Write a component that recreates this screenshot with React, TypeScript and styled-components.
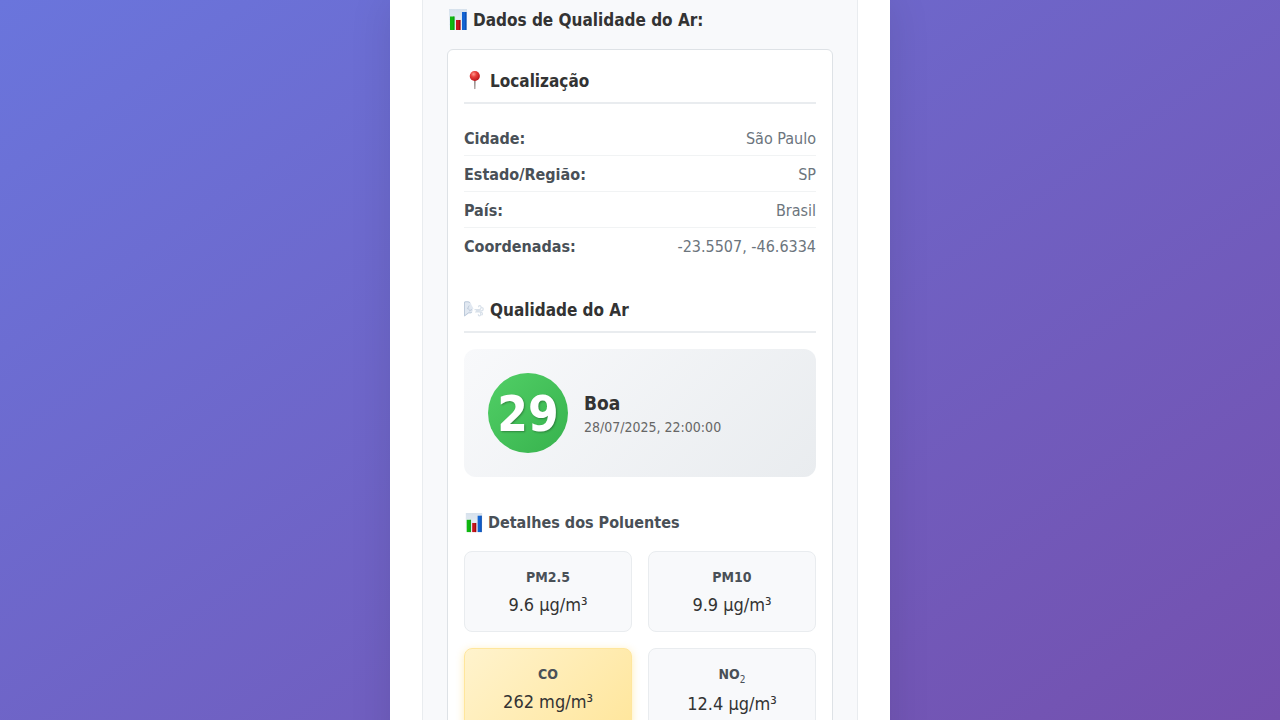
import React from "react";
import styled, { createGlobalStyle, css } from "styled-components";

const GlobalStyle = createGlobalStyle`
  *, *::before, *::after { box-sizing: border-box; }
  body {
    margin: 0;
    font-family: Tahoma, "DejaVu Sans Condensed", "Noto Sans", sans-serif;
    font-size: 16px;
    color: #333;
  }
  h2, h3, h4, p, dl, dt, dd { margin: 0; }
`;

const Page = styled.div`
  height: 100vh;
  overflow: hidden;
  background: linear-gradient(145deg, #6a75dc 0%, #7450ae 100%);
`;

const Container = styled.main`
  max-width: 500px;
  min-height: 100vh;
  margin: 0 auto;
  padding: 0 32px;
  background: #fff;
  box-shadow: 0 0 40px rgba(0, 0, 0, 0.1);
`;

const Panel = styled.section`
  padding: 6px 24px 24px;
  background: #f8f9fb;
  border: solid #e9ecef;
  border-width: 0 1px;
`;

const Title = styled.h2`
  display: flex;
  align-items: center;
  gap: 4px;
  margin-bottom: 15px;
  font-size: 17px;
  line-height: 28px;
`;

const Card = styled.div`
  padding: 16px;
  background: #fff;
  border: 1px solid #dee2e6;
  border-radius: 6px;
`;

const SectionTitle = styled.h3`
  display: flex;
  align-items: center;
  gap: 4px;
  margin-bottom: 16px;
  padding-bottom: 6px;
  border-bottom: 2px solid #e9ecef;
  font-size: 17px;
  line-height: 30px;
`;

const SubTitle = styled.h4`
  display: flex;
  align-items: center;
  gap: 4px;
  margin: 32px 0 14px;
  color: #495057;
  font-size: 16px;
  line-height: 28px;
`;

const DetailList = styled.dl`
  margin-bottom: 32px;
`;

const DetailRow = styled.div`
  display: flex;
  justify-content: space-between;
  padding: 8px 0 6px;
  line-height: 21px;
  border-bottom: 1px solid #f1f3f4;

  &:last-child { border-bottom: 0; }
`;

const DetailLabel = styled.dt`
  color: #495057;
  font-weight: 700;
`;

const DetailValue = styled.dd`
  color: #6c757d;
`;

const Summary = styled.div`
  display: flex;
  align-items: center;
  gap: 16px;
  padding: 24px;
  border-radius: 12px;
  background: linear-gradient(135deg, #f8f9fb 0%, #e9ecef 100%);
`;

const Score = styled.div`
  display: grid;
  place-items: center;
  width: 80px;
  height: 80px;
  padding-top: 4px;
  border-radius: 50%;
  background: linear-gradient(135deg, #51cf66 0%, #37b24d 100%);
  color: #fff;
  font-size: 49px;
  font-weight: 700;
  line-height: 56px;
  text-shadow: 1px 1px 2px rgba(0, 0, 0, 0.3);
`;

const Level = styled.p`
  font-size: 19px;
  font-weight: 700;
  line-height: 24px;
`;

const Stamp = styled.p`
  margin-top: 4px;
  color: #666;
  font-size: 14px;
  line-height: 17px;
`;

const PollutantGrid = styled.div`
  display: grid;
  grid-template-columns: 1fr 1fr;
  gap: 16px;
`;

const Pollutant = styled.div<{ $main?: boolean }>`
  padding: 16px;
  border: 1px solid #e9ecef;
  border-radius: 8px;
  background: #f8f9fb;
  text-align: center;

  ${(p) =>
    p.$main &&
    css`
      border-color: #ffe69c;
      background: linear-gradient(135deg, #fff3cd 0%, #ffe69c 100%);
      box-shadow: 0 2px 8px rgba(255, 193, 7, 0.3);
    `}
`;

const PollutantName = styled.p`
  margin-bottom: 8px;
  color: #495057;
  font-size: 14px;
  font-weight: 700;
  line-height: 18px;

  sub { font-size: 10px; font-weight: 400; line-height: 10px; }
`;

const PollutantValue = styled.p`
  font-size: 18px;
  line-height: 21px;
`;

const ChartIcon = ({ size }: { size: number }) => (
  <svg width={size} height={size} viewBox="0 0 22 22" aria-hidden="true">
    <defs>
      <linearGradient id="paper" x1="0" y1="0" x2="0" y2="1">
        <stop offset="0" stopColor="#d6e1ec" />
        <stop offset="1" stopColor="#f3f7fb" />
      </linearGradient>
    </defs>
    <rect x="2" y="0" width="18" height="21" fill="url(#paper)" />
    <path d="M2 5.5h18M2 10.5h18M2 15.5h18M8.3 0v21M14.3 0v21" stroke="#dbe5ee" strokeWidth="0.5" />
    <rect x="3" y="7.5" width="4.4" height="13.5" fill="#0fb80f" />
    <rect x="6.4" y="7.5" width="1" height="13.5" fill="#079a12" />
    <rect x="9" y="11" width="4.4" height="10" fill="#c4161c" />
    <rect x="12.4" y="11" width="1" height="10" fill="#96060c" />
    <rect x="15" y="3" width="4.4" height="18" fill="#1263d2" />
    <rect x="18.4" y="3" width="1" height="18" fill="#0848a8" />
  </svg>
);

const PinIcon = () => (
  <svg width="22" height="22" viewBox="0 0 22 22" aria-hidden="true">
    <defs>
      <radialGradient id="pinHead" cx="0.38" cy="0.32" r="0.7">
        <stop offset="0" stopColor="#ff9a90" />
        <stop offset="0.4" stopColor="#e8403a" />
        <stop offset="1" stopColor="#b9151b" />
      </radialGradient>
    </defs>
    <path d="M10 9h1.7l-.3 9.2-.55 1-.55-1z" fill="#8e8583" />
    <circle cx="10.8" cy="6" r="5.1" fill="url(#pinHead)" />
  </svg>
);

const WindIcon = () => (
  <svg width="22" height="22" viewBox="0 1 22 22" fill="none" aria-hidden="true">
    <path d="M0 3.5C3 2.6 6.3 3.3 7 5.6c.3 1.7 1.4 3 2.4 4.7.3.7-.9.8-.9 1.2.5.7.3 1.3-.2 1.7.3 2-1.2 2.3-3.3 2.1L0 19z" fill="#e1e8f1" />
    <path d="M.5 4v14M1 4c2-.5 4-.2 5 .8M5.2 7.5l-1.7 3.2 2 .6M1 17.5l3.7-2.8c1.6.3 2.8.1 3-.7M5 13l3-1.5" stroke="#b9c6d7" strokeWidth="0.9" />
    <path d="M10.5 11.6h4.8c2.2 0 2.4-4 .4-4-1 0-1.3.8-.9 1.6M12 12.8h5.4c2.4 0 2.4-3.4.2-3.2M11 14h4.2c2 0 2 3.8.2 3.8-.9 0-1.2-.7-.9-1.5M16.5 14.2c2.4 0 2.6 2.8.8 2.8" stroke="#d9e1ea" strokeWidth="1.2" />
  </svg>
);

const details = [
  ["Cidade:", "São Paulo"],
  ["Estado/Região:", "SP"],
  ["País:", "Brasil"],
  ["Coordenadas:", "-23.5507, -46.6334"],
];

const pollutants = [
  { id: "pm25", name: "PM2.5", value: "9.6 µg/m³" },
  { id: "pm10", name: "PM10", value: "9.9 µg/m³" },
  { id: "co", name: "CO", value: "262 mg/m³", main: true },
  { id: "no2", name: <>NO<sub>2</sub></>, value: "12.4 µg/m³" },
];

export default function App() {
  return (
    <Page>
      <GlobalStyle />
      <Container>
        <Panel>
          <Title><ChartIcon size={22} />Dados de Qualidade do Ar:</Title>
          <Card>
            <SectionTitle><PinIcon />Localização</SectionTitle>
            <DetailList>
              {details.map(([label, value]) => (
                <DetailRow key={label}>
                  <DetailLabel>{label}</DetailLabel>
                  <DetailValue>{value}</DetailValue>
                </DetailRow>
              ))}
            </DetailList>
            <SectionTitle><WindIcon />Qualidade do Ar</SectionTitle>
            <Summary>
              <Score>29</Score>
              <div>
                <Level>Boa</Level>
                <Stamp>28/07/2025, 22:00:00</Stamp>
              </div>
            </Summary>
            <SubTitle><ChartIcon size={20} />Detalhes dos Poluentes</SubTitle>
            <PollutantGrid>
              {pollutants.map((p) => (
                <Pollutant key={p.id} $main={p.main}>
                  <PollutantName>{p.name}</PollutantName>
                  <PollutantValue>{p.value}</PollutantValue>
                </Pollutant>
              ))}
            </PollutantGrid>
          </Card>
        </Panel>
      </Container>
    </Page>
  );
}
